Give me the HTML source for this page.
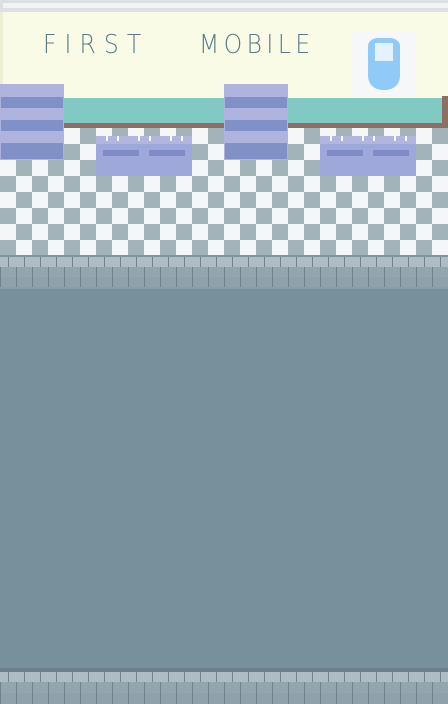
<!DOCTYPE html>
<html><head><style>
*{margin:0;padding:0}
body{width:448px;height:704px;position:relative;overflow:hidden;background:#78909c;font-family:"Liberation Sans",sans-serif}
div{position:absolute}
.chk{left:0;top:128px;width:448px;height:128px;background-color:#f5f6f8;
background-image:linear-gradient(45deg,#a3b3ba 25%,transparent 25%,transparent 75%,#a3b3ba 75%),linear-gradient(45deg,#a3b3ba 25%,transparent 25%,transparent 75%,#a3b3ba 75%);
background-size:32px 32px;background-position:0 0,16px 16px}
.brick{left:0;width:448px;height:32px;background:#8a9ea7}
.row{left:0;width:448px;height:10px;background-image:linear-gradient(90deg,#6f838d 0,#6f838d 1px,transparent 1px);background-size:16px 10px}
.shelf{width:64px;height:76px;top:84px;background:#aeb4de}
.shelf i{position:absolute;left:1px;width:62px;height:11px;background:#8290c8}
.sink{width:96px;height:40px;top:136px;background:#9ea8da}
.sink b{position:absolute;top:0;left:0;width:96px;height:8px;background:#b0b6e0}
.sink i{position:absolute;top:14px;width:36px;height:6px;background:#7f8cc6}
.sink u{position:absolute;top:0;width:2px;height:5px;background:#fff}
.txt{color:#5b7a88;font-size:26px;top:30px;font-family:"DejaVu Sans",sans-serif;font-weight:200;transform:scaleX(0.9);transform-origin:left}
</style></head><body>
<div style="left:0;top:0;width:448px;height:12px;background:#dcdfe3"></div>
<div style="left:3px;top:3px;width:445px;height:5px;background:#f2f3f5"></div>
<div style="left:0;top:12px;width:448px;height:86px;background:#f9fbe6"></div>
<div style="left:0;top:12px;width:3px;height:148px;background:#eef0d6"></div>
<div class="txt" style="left:43px;letter-spacing:9px">FIRST</div>
<div class="txt" style="left:199px;letter-spacing:5px">MOBILE</div>
<div style="left:352px;top:32px;width:64px;height:64px;background:#f6f7f8"></div>
<div style="left:368px;top:38px;width:32px;height:52px;background:#90caf9;border-radius:10px 10px 14px 14px/8px 8px 14px 14px"></div>
<div style="left:375px;top:43px;width:18px;height:18px;background:#e3f2fd"></div>
<div style="left:0;top:98px;width:444px;height:25px;background:#80cac3"></div>
<div style="left:442px;top:96px;width:6px;height:32px;background:#8d6e63"></div>
<div style="left:0;top:123px;width:448px;height:5px;background:#8d6e63"></div>
<div class="chk"></div>
<div style="left:0;top:255px;width:448px;height:2px;background:#7f949d"></div>
<div class="brick" style="top:257px"></div>
<div class="row" style="top:257px;height:10px;background-color:#aebcc3;background-position:8px 0"></div>
<div class="row" style="top:267px;height:10px;background-color:#93a6ae"></div>
<div class="row" style="top:277px;height:10px;background-color:#8fa2ab;background-position:-16px 0"></div>
<div style="left:0;top:668px;width:448px;height:4px;background:#6b808a"></div>
<div class="brick" style="top:672px"></div>
<div class="row" style="top:672px;height:10px;background-color:#aebcc3;background-position:8px 0"></div>
<div class="row" style="top:682px;height:11px;background-color:#93a6ae"></div>
<div class="row" style="top:693px;height:11px;background-color:#8fa2ab;background-position:-16px 0"></div>

<div class="shelf" style="left:0"><i style="top:13px"></i><i style="top:36px"></i><i style="top:59px;height:16px"></i></div>
<div class="shelf" style="left:224px"><i style="top:13px"></i><i style="top:36px"></i><i style="top:59px;height:16px"></i></div>
<div class="sink" style="left:96px"><b></b><i style="left:7px"></i><i style="left:53px"></i><u style="left:10px"></u><u style="left:21px"></u><u style="left:42px"></u><u style="left:53px"></u><u style="left:74px"></u><u style="left:85px"></u></div>
<div class="sink" style="left:320px"><b></b><i style="left:7px"></i><i style="left:53px"></i><u style="left:10px"></u><u style="left:21px"></u><u style="left:42px"></u><u style="left:53px"></u><u style="left:74px"></u><u style="left:85px"></u></div>
</body></html>
